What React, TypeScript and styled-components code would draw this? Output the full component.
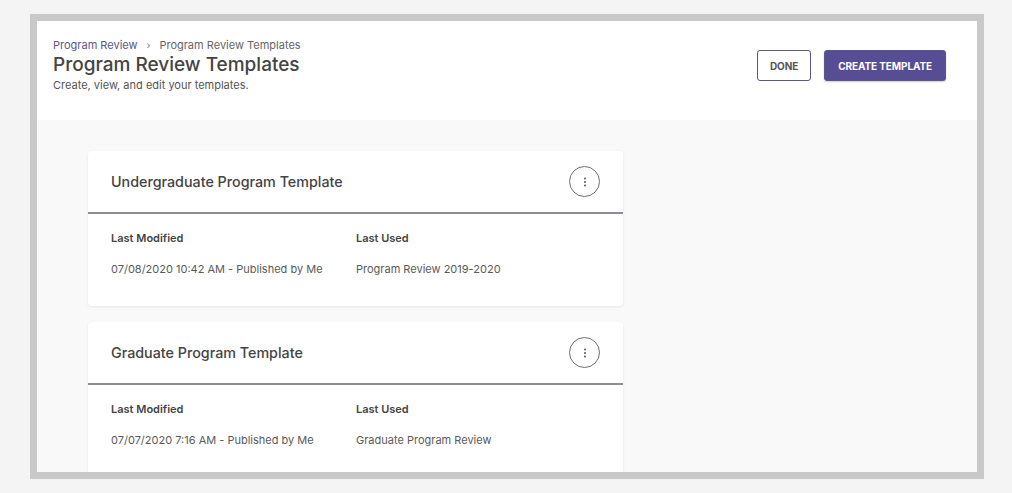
import React from "react"
import styled, { createGlobalStyle } from "styled-components"

const GlobalStyle = createGlobalStyle`
  html, body {
    margin: 0;
    padding: 0;
    background: #f4f4f4;
    font-family: Inter, "Noto Sans", "Liberation Sans", sans-serif;
  }
  * { box-sizing: border-box; }
`

const Page = styled.div`
  width: 1012px;
  height: 493px;
  padding: 14px 0 0 30px;
`

const Frame = styled.div`
  width: 954px;
  height: 465px;
  border: 7px solid #c9c9c9;
  background: #f9f9f9;
  overflow: hidden;
  display: flex;
  flex-direction: column;
`

const Header = styled.header`
  height: 99px;
  background: #ffffff;
  display: flex;
  justify-content: space-between;
  align-items: flex-start;
  padding: 17px 31px 0 16px;
  flex-shrink: 0;
`

const TitleBlock = styled.div`
  display: flex;
  flex-direction: column;
`

const Breadcrumbs = styled.nav`
  display: flex;
  align-items: center;
  gap: 9px;
  font-size: 11px;
  line-height: 14px;
  color: #666;
`

const Crumb = styled.span<{ $link?: boolean }>`
  color: ${p => (p.$link ? "#5b5784" : "#666")};
`

const Sep = styled.span`
  font-size: 10px;
  color: #777;
`

const Title = styled.h1`
  margin: 1px 0 0;
  font-size: 19px;
  line-height: 24px;
  font-weight: 500;
  color: #444;
`

const Subtitle = styled.p`
  margin: 1px 0 0;
  font-size: 11px;
  line-height: 14px;
  color: #555;
`

const Actions = styled.div`
  display: flex;
  gap: 13px;
  margin-top: 12px;
`

const Button = styled.button<{ $primary?: boolean }>`
  height: 31px;
  padding: 0 ${p => (p.$primary ? "13px" : "12px")};
  border-radius: 3px;
  font-family: inherit;
  font-size: 10px;
  font-weight: 700;
  letter-spacing: -0.1px;
  text-transform: uppercase;
  border: 1.5px solid #5b5784;
  background: ${p => (p.$primary ? "#574d95" : "#fff")};
  color: ${p => (p.$primary ? "#fff" : "#555")};
  box-shadow: ${p => (p.$primary ? "0 1px 2px rgba(0,0,0,0.2)" : "none")};
`

const Content = styled.main`
  flex: 1;
  padding: 31px 0 0 51px;
  display: flex;
  flex-direction: column;
  gap: 16px;
`

const Card = styled.section`
  width: 535px;
  background: #fff;
  border-radius: 4px;
  box-shadow: 0 1px 3px rgba(0, 0, 0, 0.08);
  flex-shrink: 0;
`

const CardHead = styled.div`
  height: 63px;
  display: flex;
  align-items: center;
  justify-content: space-between;
  padding: 0 23px 0 23px;
  border-bottom: 2px solid #8d8d97;
`

const CardTitle = styled.h2`
  margin: 0;
  font-size: 14.3px;
  font-weight: 500;
  color: #444;
`

const MenuButton = styled.button`
  width: 31px;
  height: 31px;
  border-radius: 50%;
  border: 1px solid #6d6d7a;
  background: #fff;
  padding: 0;
  display: flex;
  align-items: center;
  justify-content: center;
`

const CardBody = styled.div`
  display: grid;
  grid-template-columns: 245px 1fr;
  row-gap: 17px;
  padding: 17px 23px 30px;
`

const Label = styled.div`
  font-size: 11px;
  line-height: 14px;
  font-weight: 600;
  color: #444;
`

const Value = styled.div`
  font-size: 11px;
  line-height: 14px;
  color: #5a5a5a;
`

const Kebab = () => (
  <svg width="4" height="10" viewBox="0 0 4 10">
    <circle cx="2" cy="1.5" r="1" fill="#555" />
    <circle cx="2" cy="5" r="1" fill="#555" />
    <circle cx="2" cy="8.5" r="1" fill="#555" />
  </svg>
)

const templates = [
  {
    name: "Undergraduate Program Template",
    modified: "07/08/2020 10:42 AM - Published by Me",
    used: "Program Review 2019-2020",
  },
  {
    name: "Graduate Program Template",
    modified: "07/07/2020 7:16 AM - Published by Me",
    used: "Graduate Program Review",
  },
]

export default function App() {
  return (
    <>
      <GlobalStyle />
      <Page>
        <Frame>
          <Header>
            <TitleBlock>
              <Breadcrumbs>
                <Crumb $link>Program Review</Crumb>
                <Sep>›</Sep>
                <Crumb>Program Review Templates</Crumb>
              </Breadcrumbs>
              <Title>Program Review Templates</Title>
              <Subtitle>Create, view, and edit your templates.</Subtitle>
            </TitleBlock>
            <Actions>
              <Button>Done</Button>
              <Button $primary>Create Template</Button>
            </Actions>
          </Header>
          <Content>
            {templates.map(t => (
              <Card key={t.name}>
                <CardHead>
                  <CardTitle>{t.name}</CardTitle>
                  <MenuButton aria-label="More options">
                    <Kebab />
                  </MenuButton>
                </CardHead>
                <CardBody>
                  <Label>Last Modified</Label>
                  <Label>Last Used</Label>
                  <Value>{t.modified}</Value>
                  <Value>{t.used}</Value>
                </CardBody>
              </Card>
            ))}
          </Content>
        </Frame>
      </Page>
    </>
  )
}
